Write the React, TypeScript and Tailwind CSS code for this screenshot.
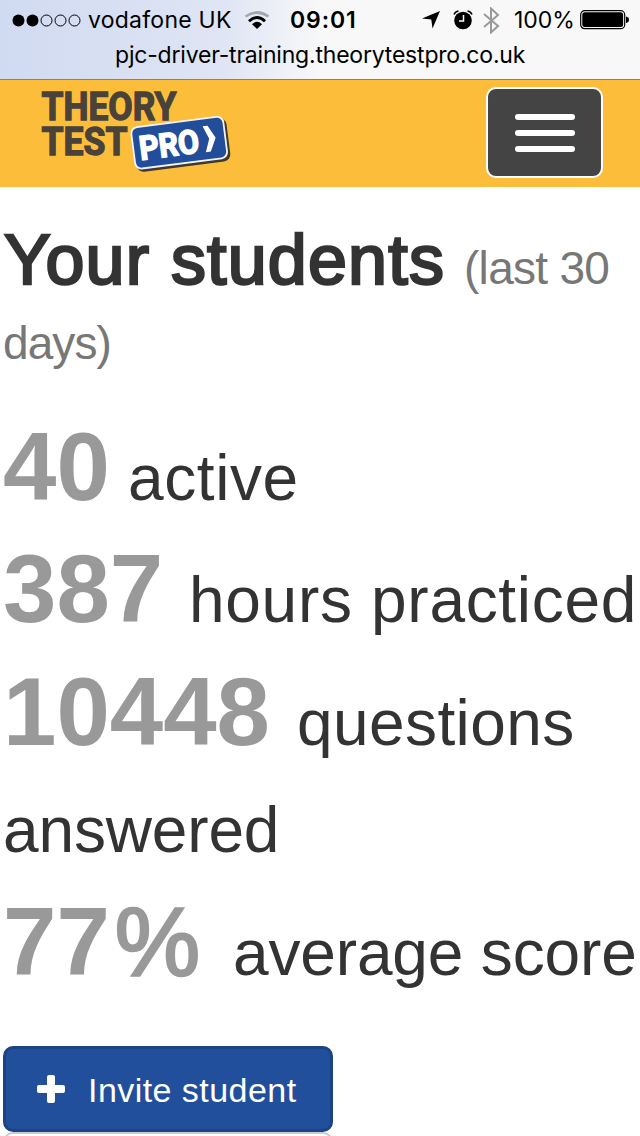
function StatusBar() {
  return (
    <div className="flex h-[80px] flex-col border-b border-[#a08040] bg-linear-to-r from-[#d0daf1] from-0% via-[#dfe5f4] via-35% to-[#f8f8f9] to-50% font-['Inter',sans-serif] text-black">
      <div className="flex h-10 items-center pl-3 whitespace-nowrap">
        <svg className="h-4 w-[70px] shrink-0" viewBox="0 0 70 16">
          <circle cx="6.5" cy="8.5" r="6" />
          <circle cx="20.5" cy="8.5" r="6" />
          <g fill="none" stroke="#000" strokeWidth="1">
            <circle cx="34.5" cy="8.5" r="5.5" />
            <circle cx="48.5" cy="8.5" r="5.5" />
            <circle cx="62.5" cy="8.5" r="5.5" />
          </g>
        </svg>
        <span className="ml-[6px] w-[156px] pt-px text-[23px] tracking-[0.25px]">vodafone UK</span>
        <svg className="h-[20px] w-[26px] shrink-0" viewBox="0 0 26 20">
          <path d="M1.500 6.500Q13-1.500 24.500 6.500" fill="none" stroke="#a3a7b0" strokeWidth="2.700" />
          <path d="M5 11.200Q13 3.700 21 11.200" fill="none" stroke="#000" strokeWidth="2.900" />
          <path d="M8 14.200Q13 9.500 18 14.200L13 19Z" />
        </svg>
        <span className="ml-[20px] w-[132px] pt-px text-[23px] font-semibold tracking-[0.9px]">09:01</span>
        <svg className="h-[18px] w-[18px] shrink-0" viewBox="0 0 18 18">
          <path d="M18 0 10.500 17.500 9.300 8.500 0 7.500Z" />
        </svg>
        <svg className="ml-[13px] h-5 w-[20px] shrink-0" viewBox="0 0 20 20">
          <circle cx="10" cy="10.500" r="8.800" />
          <path d="M1 4.500Q2.200 1.500 5.500 1M19 4.500Q17.800 1.500 14.500 1" fill="none" stroke="#000" strokeWidth="1.500" />
          <path d="M10.500 5V11H6" fill="none" stroke="#fff" strokeWidth="1.500" />
        </svg>
        <svg className="ml-[10px] h-[27px] w-[17px] shrink-0" viewBox="0 0 17 27">
          <path d="M1 7 15 19 8 25.500V1.500L15 8 1 20" fill="none" stroke="#999" strokeWidth="2" />
        </svg>
        <span className="ml-[14px] w-[66px] pt-px text-[23px]">100%</span>
        <svg className="h-5 w-[50px] shrink-0" viewBox="0 0 50 20">
          <rect x=".7" y=".7" width="44" height="18" rx="4" fill="none" stroke="#000" strokeWidth="1.200" />
          <rect x="2.300" y="2.300" width="40.800" height="14.800" rx="2.500" />
          <path d="M46 6.500Q49 7 49 9.700T46 13Z" />
        </svg>
      </div>
      <div className="h-[39px] pl-[115px] text-[23px] leading-[30px] tracking-[-0.2px] whitespace-nowrap">
        pjc-driver-training.theorytestpro.co.uk
      </div>
    </div>
  );
}

function Logo() {
  return (
    <svg
      className="h-[90px] w-[200px] font-['Roboto',sans-serif] font-bold"
      viewBox="35 85 200 90"
      role="img"
      aria-label="Theory Test Pro"
    >
      <g fill="#48423a" stroke="#48423a" strokeWidth="1.300" fontSize="38.500">
        <text x="41.500" y="119.500" textLength="135" lengthAdjust="spacingAndGlyphs">THEORY</text>
        <text x="41.500" y="154.500" textLength="86" lengthAdjust="spacingAndGlyphs">TEST</text>
      </g>
      <g transform="rotate(-7.300 179 143)">
        <rect x="134" y="123.500" width="94.500" height="43.500" rx="7" fill="#40392f" />
        <rect x="132" y="121" width="94.500" height="43.500" rx="7" fill="#f2f4fa" />
        <rect x="133.800" y="122.800" width="90.900" height="39.900" rx="5.500" fill="#214d9a" />
        <text x="139" y="155" fill="#fff" stroke="#fff" strokeWidth="1.600" fontSize="33" textLength="60" lengthAdjust="spacingAndGlyphs">PRO</text>
        <path d="M204.500 129.500h5l6.500 13-6.500 13h-5l5-13Z" fill="#fff" />
      </g>
    </svg>
  );
}

function Header() {
  return (
    <header className="flex h-[107px] justify-between bg-[#fcbd3a] pt-[5px] pr-[37px] pl-[35px]">
      <Logo />
      <button
        aria-label="Menu"
        className="mt-[2px] flex h-[91px] w-[117px] flex-col items-center justify-center gap-[10px] rounded-[10px] border-2 border-white bg-[#444]"
      >
        <span className="h-[6px] w-[60px] rounded-full bg-white" />
        <span className="h-[6px] w-[60px] rounded-full bg-white" />
        <span className="h-[6px] w-[60px] rounded-full bg-white" />
      </button>
    </header>
  );
}

export default function App() {
  return (
    <div className="h-[1136px] w-[640px] overflow-hidden bg-white font-['Liberation_Sans',Arial,sans-serif] text-[#333]">
      <StatusBar />
      <Header />
      <main className="whitespace-nowrap">
        <h1 className="flex h-[127px] items-baseline pt-[36px] pl-[4px] text-[70px] leading-[74px] font-normal">
          <span className="w-[460px] tracking-[1.200px] [-webkit-text-stroke:2.500px_#333]">Your students</span>
          <span className="text-[46px] tracking-[-0.700px] text-[#777]">(last 30</span>
        </h1>
        <div className="h-[105px] pl-[3px] text-[46px] leading-[58px] tracking-[-0.900px] text-[#777]">days)</div>
        <div className="flex h-[122px] items-baseline pl-[3px] text-[64px] leading-[96px]">
          <b className="w-[125px] text-[96px] text-[#999]">40</b>
          <span className="tracking-[0.600px]">active</span>
        </div>
        <div className="flex h-[123px] items-baseline pl-[3px] text-[64px] leading-[96px]">
          <b className="w-[186px] text-[96px] text-[#999]">387</b>
          <span className="tracking-[0.700px]">hours practiced</span>
        </div>
        <div className="flex h-[112px] items-baseline pl-[3px] text-[64px] leading-[96px]">
          <b className="w-[294px] text-[96px] text-[#999]">10448</b>
          <span className="tracking-[0.400px]">questions</span>
        </div>
        <div className="h-[118px] pl-[3px] text-[64px] leading-[109px] tracking-[-0.150px]">answered</div>
        <div className="flex h-[152px] items-baseline pl-[3px] text-[64px] leading-[96px]">
          <div className="w-[230px] text-[96px] text-[#999]">
            <b>77</b>
            <span className="ml-[5px] [-webkit-text-stroke:2.500px_#999]">%</span>
          </div>
          <span className="tracking-[-0.150px]">average score</span>
        </div>
        <button className="ml-[3px] flex h-[86px] w-[330px] items-center rounded-[10px] border-[3px] border-[#1c4484] bg-[#214f9c] pl-[31px] text-[34px] text-white">
          <svg className="h-7 w-7" viewBox="0 0 28 28">
            <path d="M12 0h4q2 0 2 2v8h8q2 0 2 2v4q0 2-2 2h-8v8q0 2-2 2h-4q-2 0-2-2v-8H2q-2 0-2-2v-4q0-2 2-2h8V2q0-2 2-2Z" fill="#fff" />
          </svg>
          <span className="ml-[23px] pt-[2px] tracking-[0.450px]">Invite student</span>
        </button>
        <div className="ml-[3px] h-[86px] w-[330px] rounded-[10px] border-2 border-[#ccc]" />
      </main>
    </div>
  );
}
